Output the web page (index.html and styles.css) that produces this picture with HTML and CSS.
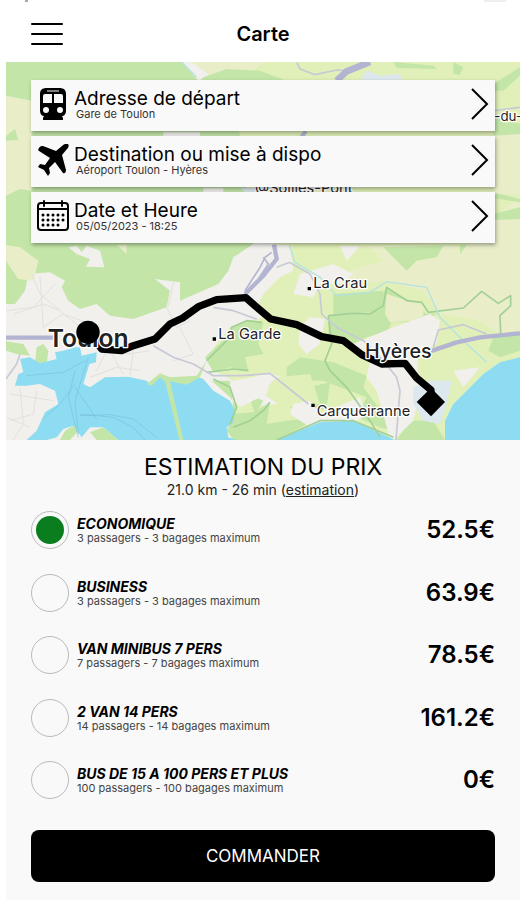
FILE: index.html
```html
<!DOCTYPE html>
<html lang="fr">

<head>
    <meta charset="UTF-8" />
    <meta name="viewport" content="width=device-width, initial-scale=1">
    <title>Carte</title>
    <link rel="stylesheet" href="styles.css">
</head>

<body>
    <div class="app">
        <div class="status"><span class="clock"></span><span class="battery"></span></div>
        <header class="topbar">
            <button class="menu" type="button" aria-label="Menu"><span></span><span></span><span></span></button>
            <h1>Carte</h1>
        </header>

        <section class="map">
            <svg class="map-bg" viewBox="18 4 1542 1134" preserveAspectRatio="xMidYMid slice">
                <rect x="18" y="4" width="1542" height="1134" fill="#f1f0ec" />
                <!-- campagne -->
                <path fill="#e0f0b8" d="M580 4H1560V900L1500 905 1450 940 1400 990 1360 1030 1335 1080V1138H1185L1060 1080 960 1080 830 1138H700L690 1040 720 1000 790 1035 900 1020 850 950 800 935 760 950 700 960 640 930 620 890 690 800 790 770 770 740 790 700 840 650 880 630 870 555 740 540 640 380 640 60Z" />
                <path fill="#e9eec9" d="M1080 555H1400L1560 400V810L1500 820 1440 780 1320 760 1270 690 1150 660 1020 680 1050 630 1150 600 1110 560ZM570 4H790L740 50 600 40ZM1480 220H1560V400H1480Z" />
                <!-- collines -->
                <path fill="#c3e6a8" d="M18 4H545L600 60 700 60 740 400 760 550 700 590 685 630 655 670 540 720V665L465 655 510 690 500 740 400 775 330 765 290 730 240 745 205 720 185 680 195 660 150 635 85 640 75 690 45 730H18Z" />
                <path fill="#e9eec9" d="M18 105L95 120V390L60 385 18 405 18 240 55 238 45 205 18 225ZM18 553L60 560 115 600 100 660 55 655 18 600ZM350 552H380V580Z" />
                <path fill="#f1f0ec" d="M205 560L230 555 245 575 260 555 300 570 313 620 258 618 270 595 230 580ZM490 214H600V230H490ZM610 382H670V398H610ZM545 4H575L625 40 620 60H595Z" />
                <path fill="#c3e6a8" d="M610 50L680 25 780 30 860 60H600ZM1180 4L1300 15 1310 25 1190 22ZM1360 4L1390 20 1380 42 1360 40ZM1480 70L1560 20V45L1510 90H1480ZM1480 160L1560 190V220L1480 225ZM1480 395L1560 415V425L1480 412ZM1480 460L1560 440V475L1480 478ZM1150 560L1330 555 1310 590 1250 600 1220 630 1190 600ZM130 850L145 870 140 910 105 905 110 860ZM18 842L70 850 90 885 50 880 18 870ZM1380 554H1400L1380 580Z" />
                <path fill="#c3e6a8" d="M985 765L1110 760 1160 680 1230 720 1280 760 1320 758 1240 785 1175 785 1165 810 1100 830 1060 850 1020 835 985 830ZM1000 700L1150 690 1140 755 1000 760ZM1480 830L1560 820V870L1500 890 1465 870ZM860 920L900 890 1000 905 1100 945 1090 980 1150 1060 1175 1110 1140 1100 1070 1070 1100 1010 1020 980 970 960 860 960ZM1190 1138L1230 1080 1300 1080 1335 1138Z" />
                <path fill="#c3e6a8" d="M615 890L680 830 695 800 740 780 790 785 775 850 790 880 735 890 745 930 690 920 640 935ZM635 960L690 960 700 1040 690 1060 760 1055 810 1025 800 1090 860 1080 960 1070 830 1138H700L680 1110 710 1040 690 1010ZM880 990L990 965 980 1040 920 1070 870 1040ZM745 1000L790 1020 765 1060Z" />
                <path fill="#e9eec9" d="M1160 700L1270 735 1270 765 1240 780 1170 785 1155 760Z" />
                <path fill="#e0f0b8" d="M810 970L830 950 930 940 960 1030 850 1040 790 1000ZM990 840L1030 835 1080 880 1060 910 1000 900Z" />
                <path fill="#f1f0ec" d="M880 700L900 640 1000 610 1060 640 1020 670 960 670 940 710ZM900 800L930 770 975 775 960 850 920 880 895 850ZM1060 850L1180 800 1290 760 1320 780 1310 850 1250 880 1260 1000 1240 1080 1180 1138H1170L1150 1060 1130 990 1100 950 1110 900ZM880 1030L930 1020 960 1060 1080 1010 1100 1060 1060 1090 960 1080 930 1100 870 1060ZM690 970L750 985 810 965 800 1000 720 1040 700 1020ZM1020 556H1080L1040 600ZM1360 930L1440 920 1390 980Z" />
                <path fill="#dce7ee" d="M1100 30L1140 45 1200 40 1205 60H1080ZM1240 980L1290 960 1355 960 1340 1030 1320 1090 1270 1080 1240 1030ZM720 382H800V398H740Z" />
                <!-- mer -->
                <path fill="#8ddcf2" d="M60 895L90 890 120 908 170 895 165 875 190 870 225 860 240 860 245 885 290 875 288 905 268 910 250 970 270 980 315 950 385 948 440 960 450 970 480 945 560 968 590 948 610 955 640 990 690 1020 705 1050 700 1085 680 1100 685 1130 710 1138H355L310 1100 270 1100 245 1130 220 1095 190 1105 170 1130 140 1138H80L110 1110 135 1055 175 1030 165 990 120 970 80 975 45 975 55 940 70 935Z" />
                <path fill="#8ddcf2" d="M830 1138L960 1085 1060 1080 1185 1138ZM1335 1138V1080L1360 1030 1400 990 1450 940 1500 905 1560 890V1138Z" />
                <path fill="#c3e6a8" d="M180 1138L195 1110 220 1095 235 1110 210 1138ZM290 1138L270 1115 310 1100 355 1138ZM440 970L480 938 510 950 590 945 620 900 600 950 560 972 510 962 550 1138H538L496 965 480 950 455 975Z" />
                <!-- limites et sentiers -->
                <g fill="none" stroke="#a2cf96" stroke-width="5" stroke-linejoin="round">
                    <path d="M985 765L1060 758 1110 760 1150 735 1160 680 1220 720 1265 725 1285 755 1390 742 1445 692 1495 728 1532 705V735L1500 765 1502 820M985 765L995 850 975 900 990 930 1040 980 1090 1050 1110 1080 1140 1130M620 935L700 925 745 930M640 955L690 980 710 1040 690 1090M700 1100L750 1080 790 1050 810 1025M830 1138L960 1080 1060 1080 1180 1130M620 900L690 830 695 800 740 780 785 785" />
                </g>
                <g fill="none" stroke="#b3e3e0" stroke-width="4">
                    <path d="M545 4L590 50M868 555L885 605 960 650 1010 705 1110 695 1160 663 1280 680 1320 770 1400 850 1460 905" />
                </g>
                <g fill="none" stroke="#79bedb" stroke-width="3" opacity=".6">
                    <path d="M265 890L225 1020 235 1120M225 930L205 1010 235 1130M80 945L190 935 255 900M130 1075L180 1030 225 970M240 1065L330 1062 400 1075 470 1130M240 1060L340 1070 400 1100 435 1138M225 980L290 1075" />
                </g>
                <!-- routes -->
                <g fill="none" stroke="#e2e1e0" stroke-width="3">
                    <path d="M18 750L100 740 165 670M95 640L120 700 240 800M40 760L130 730 180 750M120 650L130 800 190 760 300 800M520 665L505 740M500 740L530 800 570 780M450 870L380 880 330 850 290 930M330 870L370 940M400 870L390 945M540 800L580 880 520 900M270 950L350 920 420 930M30 1000L160 1020M60 980L70 1090 40 1138M110 990L100 1060 30 1080M20 1070L90 1100" />
                </g>
                <g fill="none" stroke="#c8c9d6" stroke-width="5" stroke-linejoin="round">
                    <path d="M890 6L900 25 945 42 1010 28 1040 30M18 955L50 910 60 880M460 855L520 890 580 910 640 945 730 945 810 938 850 970 925 1030M640 740L700 750 770 775M868 605L930 640 960 700 965 760 1010 800 1090 840 1150 900 1190 950 1200 990 1188 1138M830 620L870 605M1300 860L1315 808 1390 792 1460 820M1485 150L1560 140" />
                </g>
                <g fill="none" stroke="#b2b4d1" stroke-linejoin="round">
                    <path stroke-width="13" d="M18 831H160M735 700L790 645 830 595 822 552M1290 872L1370 845 1440 830 1560 818" />
                    <path stroke-width="20" d="M1010 60L1040 32 1110 4" />
                    <path stroke-width="12" d="M904 228L918 212" />
                    <path stroke-width="5" d="M735 690L780 620 795 590 815 575M775 655L805 610 790 590" />
                </g>
                <!-- trajet -->
                <path class="route" d="M265 815L305 865 365 870 400 855 465 835 510 790 548 772 595 738 650 717 738 711 765 735 812 775 890 792 965 828 1030 840 1085 882 1145 910 1215 908 1250 952 1293 988V1020" />
                <g class="labels">
                    <text x="1483" y="182" font-size="40">-du-</text>
                    <text x="765" y="397" font-size="44">@Sollies-Pont</text>
                    <text x="940" y="683" font-size="44">La Crau</text>
                    <text x="655" y="835" font-size="44">La Garde</text>
                    <text x="950" y="1066" font-size="44">Carqueiranne</text>
                    <text x="1095" y="892" font-size="59" font-weight="500">Hyères</text>
                    <text x="143" y="859" font-size="74" font-weight="600">Toulon</text>
                </g>
                <path d="M923 679h10v10h-10zM638 830h10v10h-10zM934 1029h10v10h-10z" />
                <circle cx="264" cy="815" r="35" />
                <path d="M1293 982L1335 1024 1293 1067 1250 1024Z" />
            </svg>

            <div class="cards">
                <button class="card" type="button">
                    <svg class="icon" viewBox="0 0 32 32">
                        <path d="M10 0h12c5 0 7 2 7 6v17c0 3-2 5-4 5l1 2v2H6v-2l1-2c-2 0-4-2-4-5V6c0-4 2-6 7-6z" />
                        <path fill="#f9f9f9" d="M8 6h7v9H6V8q0-2 2-2zM17 6h7q2 0 2 2v7h-9z" />
                        <path fill="none" stroke="#f9f9f9" d="M10 3h12" />
                        <circle cx="9" cy="22" r="3" fill="#f9f9f9" />
                        <circle cx="23" cy="22" r="3" fill="#f9f9f9" />
                    </svg>
                    <span class="card-text"><span class="title">Adresse de départ</span><span class="sub">Gare de Toulon</span></span>
                    <svg class="chevron" viewBox="0 0 18 32"><path d="M1 1L16 16 1 31" /></svg>
                </button>
                <button class="card" type="button">
                    <svg class="icon" viewBox="0 0 32 32">
                        <path d="M2 4c1-2 3-2 4-2l13 5 6-5c2-2 5-3 6-2s1 3-1 5l-5 6 4 15c0 2-1 4-3 3l-8-11-6 6 1 5-2 3-4-6-6-3 2-3 5 1 5-7L2 7C1 6 1 5 2 4z" />
                    </svg>
                    <span class="card-text"><span class="title">Destination ou mise à dispo</span><span class="sub">Aéroport Toulon - Hyères</span></span>
                    <svg class="chevron" viewBox="0 0 18 32"><path d="M1 1L16 16 1 31" /></svg>
                </button>
                <button class="card" type="button">
                    <svg class="icon" viewBox="0 0 32 32">
                        <path fill="none" stroke="#000" stroke-width="2" d="M4 3h24q3 0 3 3v21q0 3-3 3H4q-3 0-3-3V6q0-3 3-3zM1 9h30" />
                        <path stroke="#000" stroke-width="2" stroke-linecap="round" d="M7 1v5M25 1v5" />
                        <path fill="none" stroke="#000" stroke-width="3" stroke-linecap="round" stroke-dasharray="0 5" d="M6 15h21M6 20h21M6 25h16" />
                    </svg>
                    <span class="card-text"><span class="title">Date et Heure</span><span class="sub">05/05/2023 - 18:25</span></span>
                    <svg class="chevron" viewBox="0 0 18 32"><path d="M1 1L16 16 1 31" /></svg>
                </button>
            </div>
        </section>

        <main class="panel">
            <h2>ESTIMATION DU PRIX</h2>
            <p class="trip">21.0 km - 26 min (<a href="#">estimation</a>)</p>

            <div class="offers">
                <label class="offer">
                    <input type="radio" name="offer" checked>
                    <span class="offer-text"><span class="name">ECONOMIQUE</span><span class="seats">3 passagers - 3 bagages maximum</span></span>
                    <span class="price">52.5€</span>
                </label>
                <label class="offer">
                    <input type="radio" name="offer">
                    <span class="offer-text"><span class="name">BUSINESS</span><span class="seats">3 passagers - 3 bagages maximum</span></span>
                    <span class="price">63.9€</span>
                </label>
                <label class="offer">
                    <input type="radio" name="offer">
                    <span class="offer-text"><span class="name">VAN MINIBUS 7 PERS</span><span class="seats">7 passagers - 7 bagages maximum</span></span>
                    <span class="price">78.5€</span>
                </label>
                <label class="offer">
                    <input type="radio" name="offer">
                    <span class="offer-text"><span class="name">2 VAN 14 PERS</span><span class="seats">14 passagers - 14 bagages maximum</span></span>
                    <span class="price">161.2€</span>
                </label>
                <label class="offer">
                    <input type="radio" name="offer">
                    <span class="offer-text"><span class="name">BUS DE 15 A 100 PERS ET PLUS</span><span class="seats">100 passagers - 100 bagages maximum</span></span>
                    <span class="price">0€</span>
                </label>
            </div>

            <button class="order" type="button">COMMANDER</button>
        </main>
    </div>
</body>

</html>
```

FILE: styles.css
```css
* {
    box-sizing: border-box;
}

body {
    margin: 0;
    background: #fff;
    color: #000;
    font-family: Inter, "Liberation Sans", sans-serif;
}

button {
    font-family: inherit;
    color: inherit;
    border: 0;
    padding: 0;
    cursor: pointer;
}

.app {
    display: flex;
    flex-direction: column;
    min-height: 100vh;
    padding: 0 4px 0 6px;
}

.status {
    display: flex;
    justify-content: space-between;
    height: 2px;
    padding: 0 14px 0 19px;
}

.clock {
    width: 3px;
    background: #aaa;
}

.battery {
    width: 22px;
    background: #eee;
}

.topbar {
    display: grid;
    grid-template-columns: 32px 1fr 32px;
    align-items: center;
    height: 60px;
    padding: 4px 25px 0;
}

.menu {
    display: flex;
    flex-direction: column;
    gap: 8px;
    background: none;
}

.menu span {
    height: 2px;
    border-radius: 1px;
    background: #000;
}

h1 {
    margin: 0;
    font-size: 20px;
    font-weight: 600;
    line-height: 24px;
    text-align: center;
}

/* carte */
.map {
    display: grid;
}

.map-bg {
    grid-area: 1 / 1;
    display: block;
    width: 100%;
    height: 100%;
}

.route {
    fill: none;
    stroke: #000;
    stroke-width: 22;
    stroke-linejoin: round;
}

.labels {
    fill: #222;
    stroke: #fff;
    stroke-width: 8;
    stroke-linejoin: round;
    paint-order: stroke;
}

.cards {
    grid-area: 1 / 1;
    display: flex;
    flex-direction: column;
    gap: 5px;
    padding: 18px 25px;
}

.card {
    display: flex;
    align-items: center;
    gap: 5px;
    height: 51px;
    padding: 0 6px 3px;
    background: #f9f9f9;
    text-align: left;
    box-shadow: 1px 2px 4px rgba(0, 0, 0, .35);
}

.icon {
    flex: none;
    width: 32px;
    height: 32px;
}

.card-text {
    flex: 1;
    display: flex;
    flex-direction: column;
}

.title {
    font-size: 19px;
    line-height: 20px;
}

.sub {
    padding-left: 2px;
    font-size: 11px;
    line-height: 11px;
    color: #333;
}

.chevron {
    width: 18px;
    height: 32px;
    fill: none;
    stroke: #000;
    stroke-width: 2;
}

/* prix */
.panel {
    flex: 1;
    display: flex;
    flex-direction: column;
    padding: 12px 25px 18px;
    background: #f9f9f9;
}

h2 {
    margin: 0;
    font-size: 23px;
    font-weight: 400;
    line-height: 30px;
    text-align: center;
}

.trip {
    margin: 0;
    font-size: 14px;
    line-height: 16px;
    text-align: center;
    color: #222;
}

.trip a {
    color: inherit;
}

.offers {
    flex: 1;
    display: flex;
    flex-direction: column;
    justify-content: space-between;
    gap: 10px;
    padding: 13px 0 31px;
}

.offer {
    display: flex;
    align-items: center;
    gap: 8px;
}

.offer input {
    appearance: none;
    flex: none;
    width: 38px;
    height: 38px;
    margin: 0;
    padding: 4px;
    border: 1px solid #bbb;
    border-radius: 50%;
}

.offer input:checked {
    background: #0a7d1e content-box;
}

.offer-text {
    flex: 1;
    display: flex;
    flex-direction: column;
}

.name {
    font-size: 14px;
    font-style: italic;
    font-weight: 700;
    line-height: 16px;
}

.seats {
    font-size: 11px;
    line-height: 12px;
    color: #444;
}

.price {
    font-size: 24px;
    font-weight: 600;
    line-height: 30px;
}

.order {
    height: 52px;
    border-radius: 8px;
    background: #000;
    color: #fff;
    font-size: 17px;
}
```
